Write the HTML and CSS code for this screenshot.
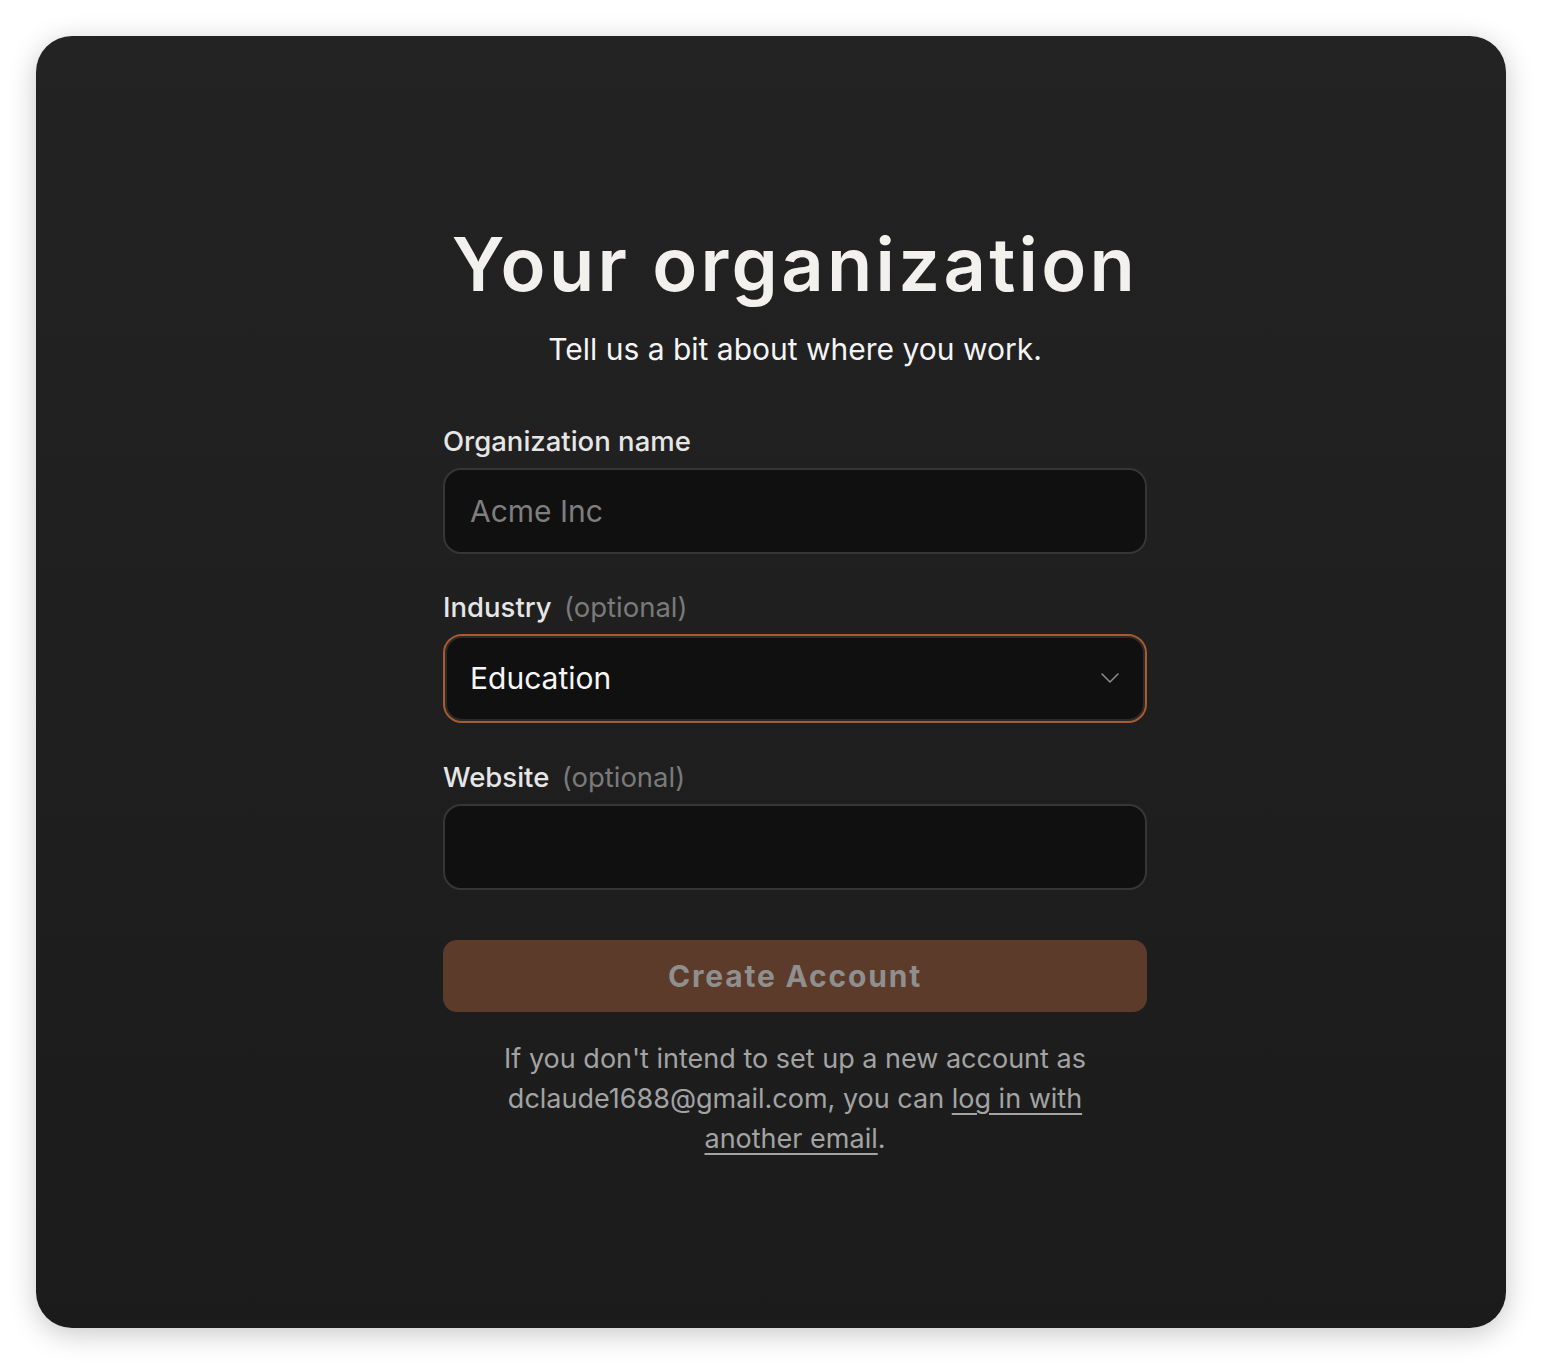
FILE: index.html
```html
<!DOCTYPE html>
<html lang="en">
<head>
  <meta charset="UTF-8" />
  <meta name="viewport" content="width=device-width, initial-scale=1.0"/>
  <title>Your organization</title>
  <link rel="stylesheet" href="styles.css">
</head>
<body>
  <div class="card">
    <div class="form-wrap">
      <h1>Your organization</h1>
      <p class="subtitle">Tell us a bit about where you work.</p>

      <label class="field-label" for="org">Organization name</label>
      <input class="field" id="org" type="text" placeholder="Acme Inc">

      <label class="field-label" for="industry">Industry <span class="optional">(optional)</span></label>
      <div class="select-box focused">
        <span class="select-value">Education</span>
        <svg class="chevron" width="18" height="10" viewBox="0 0 18 10" fill="none">
          <path d="M1 1l8 8 8-8" stroke="#8a8a8a" stroke-width="1.6" stroke-linecap="round" stroke-linejoin="round"/>
        </svg>
      </div>

      <label class="field-label" for="site">Website <span class="optional">(optional)</span></label>
      <input class="field" id="site" type="text">

      <button class="create-btn" disabled>Create Account</button>

      <p class="footnote">
        If you don't intend to set up a new account as dclaude1688@gmail.com, you can <a href="#">log in with another email</a>.
      </p>
    </div>
  </div>
</body>
</html>
```

FILE: styles.css
```css
* {
  box-sizing: border-box;
}

body {
  margin: 0;
  background: #ffffff;
  font-family: Inter, "Noto Sans", sans-serif;
  padding: 36px;
}

.card {
  height: 1292px;
  border-radius: 36px;
  background: linear-gradient(180deg, #232323 0%, #1b1b1b 100%);
  box-shadow: 0 6px 28px rgba(0, 0, 0, 0.22);
  display: flex;
  justify-content: center;
  padding: 184px 0 0 48px;
}

.form-wrap {
  width: 704px;
  display: flex;
  flex-direction: column;
}

h1 {
  margin: 0;
  text-align: center;
  color: #f2f1ee;
  font-size: 74px;
  font-weight: 600;
  letter-spacing: 3.3px;
  line-height: 1.2;
}

.subtitle {
  margin: 22px 0 57px;
  text-align: center;
  color: #f4f4f4;
  font-size: 30px;
}

.field-label {
  color: #e6e6e6;
  font-size: 27.5px;
  font-weight: 500;
  margin-bottom: 10px;
}

.optional {
  color: #7a7a7a;
  font-weight: 400;
  margin-left: 5px;
}

.field {
  height: 86px;
  border: 2px solid #363636;
  border-radius: 18px;
  background: #101010;
  color: #f4f4f4;
  font-family: inherit;
  font-size: 30px;
  padding: 0 25px;
  margin-bottom: 36px;
  outline: none;
}

.field::placeholder {
  color: #7e7e7e;
}

.select-box {
  height: 89px;
  border-radius: 19px;
  background: #101010;
  display: flex;
  align-items: center;
  justify-content: space-between;
  padding: 0 26px 0 25px;
  margin-bottom: 37px;
}

.select-box.focused {
  border: 2px solid #a95a31;
  box-shadow: inset 0 0 0 2px #2a2a2a;
}

.select-value {
  color: #f6f6f6;
  font-size: 30px;
}

.create-btn {
  margin-top: 14px;
  height: 72px;
  border: none;
  border-radius: 14px;
  background: #5d3b2b;
  color: #8f8f8f;
  font-family: inherit;
  font-size: 30px;
  font-weight: 700;
  letter-spacing: 1.8px;
}

.footnote {
  margin: 27px 40px 0;
  text-align: center;
  color: #a3a3a3;
  font-size: 27px;
  line-height: 40px;
}

.footnote a {
  color: #a3a3a3;
  text-decoration: underline;
  text-underline-offset: 5px;
}
```
